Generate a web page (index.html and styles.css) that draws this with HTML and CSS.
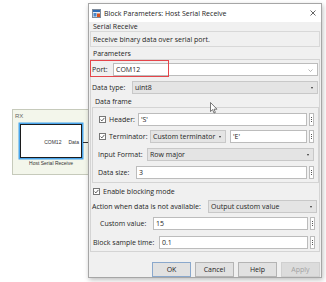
FILE: index.html
```html
<!DOCTYPE html>
<html lang="en">
<head>
    <meta charset="UTF-8">
    <title>Block Parameters: Host Serial Receive</title>
    <link rel="stylesheet" href="styles.css">
</head>
<body>
    <!-- model canvas -->
    <div class="subsystem">
        <span class="subsystem-label">RX</span>
    </div>
    <div class="block">
        <span class="block-port">COM12</span>
        <span class="block-out">Data</span>
    </div>
    <div class="wire"></div>
    <div class="block-name">Host Serial Receive</div>

    <!-- dialog -->
    <div class="dialog">
        <div class="titlebar">
            <svg class="title-icon" width="9" height="9" viewBox="0 0 9 9">
                <rect x="0.5" y="0.5" width="8" height="8" fill="#e8eef5" stroke="#7f8c9c"/>
                <rect x="1" y="1" width="7" height="2" fill="#2f6db5"/>
                <rect x="1.5" y="4" width="3" height="3.5" fill="#4a86c8"/>
                <rect x="5" y="4.5" width="3" height="3.5" fill="#d9531e"/>
            </svg>
            <span class="title-text">Block Parameters: Host Serial Receive</span>
            <svg class="close" width="6" height="6" viewBox="0 0 6 6">
                <path d="M0.5 0.5 L5.5 5.5 M5.5 0.5 L0.5 5.5" stroke="#555" stroke-width="0.9"/>
            </svg>
        </div>

        <div class="dialog-body">
            <div class="group-title">Serial Receive</div>
            <div class="desc">Receive binary data over serial port.</div>

            <div class="group-title params-title">Parameters</div>
            <div class="params">
                <div class="row row-port">
                    <span class="label w-port">Port:</span>
                    <div class="field input">COM12
                        <svg class="chev" width="5" height="3" viewBox="0 0 5 3"><path d="M0.5 0.5 L2.5 2.5 L4.5 0.5" stroke="#999" stroke-width="0.7" fill="none"/></svg>
                    </div>
                    <span class="highlight"></span>
                </div>
                <div class="row row-type">
                    <span class="label w-type">Data type:</span>
                    <div class="field select">uint8<i class="arrow"></i></div>
                </div>

                <div class="frame">
                    <div class="group-title frame-title">Data frame</div>
                    <div class="frame-box">
                        <div class="row row-check">
                            <span class="check"><svg width="7" height="7" viewBox="0 0 7 7"><rect x="0.5" y="0.5" width="6" height="6" fill="#fff" stroke="#777"/><path d="M1.6 3.6 L2.9 4.9 L5.4 1.9" stroke="#333" stroke-width="0.8" fill="none"/></svg></span>
                            <span class="label w-header">Header:</span>
                            <div class="field input">'S'</div>
                            <span class="more"><i></i></span>
                        </div>
                        <div class="row row-check row-term">
                            <span class="check"><svg width="7" height="7" viewBox="0 0 7 7"><rect x="0.5" y="0.5" width="6" height="6" fill="#fff" stroke="#777"/><path d="M1.6 3.6 L2.9 4.9 L5.4 1.9" stroke="#333" stroke-width="0.8" fill="none"/></svg></span>
                            <span class="label w-term">Terminator:</span>
                            <div class="field select term-select">Custom terminator<i class="arrow"></i></div>
                            <div class="field input">'E'</div>
                            <span class="more"><i></i></span>
                        </div>
                        <div class="row row-inner">
                            <span class="label w-format">Input Format:</span>
                            <div class="field select format-select">Row major<i class="arrow"></i></div>
                        </div>
                        <div class="row row-inner">
                            <span class="label w-size">Data size:</span>
                            <div class="field input">3</div>
                            <span class="more"><i></i></span>
                        </div>
                    </div>
                </div>

                <div class="row row-blocking">
                    <span class="check"><svg width="7" height="7" viewBox="0 0 7 7"><rect x="0.5" y="0.5" width="6" height="6" fill="#fff" stroke="#777"/><path d="M1.6 3.6 L2.9 4.9 L5.4 1.9" stroke="#333" stroke-width="0.8" fill="none"/></svg></span>
                    <span class="label">Enable blocking mode</span>
                </div>
                <div class="row row-action">
                    <span class="label w-action">Action when data is not available:</span>
                    <div class="field select action-select">Output custom value<i class="arrow"></i></div>
                </div>
                <div class="row row-custom">
                    <span class="label w-custom">Custom value:</span>
                    <div class="field input">15</div>
                    <span class="more"><i></i></span>
                </div>
                <div class="row row-sample">
                    <span class="label w-sample">Block sample time:</span>
                    <div class="field input">0.1</div>
                    <span class="more"><i></i></span>
                </div>
            </div>

            <div class="buttons">
                <button class="btn btn-ok">OK</button>
                <button class="btn">Cancel</button>
                <button class="btn">Help</button>
                <button class="btn btn-disabled">Apply</button>
            </div>
        </div>
    </div>

    <svg class="cursor" width="8" height="12" viewBox="0 0 8 12">
        <path d="M0.5 0.5 L0.5 9.5 L2.6 7.6 L4 11 L5.4 10.4 L4 7.2 L7 7.2 Z" fill="#fff" stroke="#444" stroke-width="0.7"/>
    </svg>
</body>
</html>
```

FILE: styles.css
```css
* {
    margin: 0;
    padding: 0;
    box-sizing: border-box;
}

body {
    width: 326px;
    height: 282px;
    position: relative;
    overflow: hidden;
    background: #fff;
    font-family: "Open Sans", "Noto Sans", sans-serif;
    font-size: 7px;
    color: #1e1e1e;
}

/* model canvas */
.subsystem {
    position: absolute;
    left: 12px;
    top: 109px;
    width: 90px;
    height: 66px;
    background: #f3f6eb;
    border: 1px solid #c6cabb;
    padding: 1px 2px;
}

.subsystem-label {
    font-family: "Liberation Sans", Arial, sans-serif;
    font-size: 6px;
    color: #666;
}

.block {
    position: absolute;
    left: 20px;
    top: 124px;
    width: 62px;
    height: 34px;
    background: #fff;
    border: 1px solid #1c1c1c;
    box-shadow: 0 0 0 1.5px #49a5ec;
    display: flex;
    align-items: center;
    justify-content: flex-end;
    gap: 7px;
    padding: 1px 2px 0 0;
    font-family: "Liberation Sans", Arial, sans-serif;
    font-size: 5px;
    color: #333;
}

.wire {
    position: absolute;
    left: 83px;
    top: 142px;
    width: 6px;
    height: 1px;
    background: #333;
}

.block-name {
    position: absolute;
    left: 20px;
    top: 160px;
    width: 62px;
    text-align: center;
    font-family: "Liberation Sans", Arial, sans-serif;
    font-size: 5px;
    color: #333;
}

/* dialog window */
.dialog {
    position: absolute;
    left: 88px;
    top: 3px;
    width: 234px;
    height: 275px;
    background: #f0f0f0;
    border: 1px solid #a6a6a6;
    box-shadow: 1px 2px 5px rgba(0, 0, 0, 0.25);
    display: flex;
    flex-direction: column;
}

.titlebar {
    height: 18px;
    background: #fff;
    display: flex;
    align-items: center;
    padding: 0 5px 0 3px;
    gap: 3px;
}

.title-text {
    flex: 1;
    color: #222;
}

.dialog-body {
    flex: 1;
    padding: 0 1px;
    display: flex;
    flex-direction: column;
}

.group-title {
    height: 9px;
    line-height: 9px;
    padding-left: 3px;
    color: #222;
}

.desc {
    height: 16px;
    border: 1px solid #d8d8d8;
    display: flex;
    align-items: center;
    padding-left: 2px;
}

.params-title {
    height: 11px;
    line-height: 11px;
    margin-top: 1px;
}

.params {
    height: 193px;
    border: 1px solid #d4d4d4;
    display: flex;
    flex-direction: column;
}

.row {
    display: flex;
    align-items: center;
    padding: 0 1px;
    white-space: nowrap;
}

.label {
    flex-shrink: 0;
}

.field {
    height: 13px;
    display: flex;
    align-items: center;
    padding: 0 2px;
    position: relative;
}

.input {
    flex: 1;
    background: #fff;
    border: 1px solid #bcbcbc;
}

.select {
    background: #e4e4e4;
    border: 1px solid #c8c8c8;
}

.arrow {
    position: absolute;
    right: 4px;
    top: 5px;
    border-left: 1.5px solid transparent;
    border-right: 1.5px solid transparent;
    border-top: 2px solid #333;
}

.chev {
    position: absolute;
    right: 4px;
    top: 5px;
}

.more {
    width: 5px;
    height: 13px;
    margin-left: 2px;
    background: #fff;
    border: 1px solid #bcbcbc;
    display: flex;
    justify-content: center;
    align-items: center;
    flex-shrink: 0;
}

.more i {
    width: 1px;
    height: 1px;
    background: #555;
    box-shadow: 0 -2px 0 #555, 0 2px 0 #555;
}

.check {
    display: flex;
    margin-right: 3px;
}

/* port row */
.row-port {
    height: 19px;
    position: relative;
}

.highlight {
    position: absolute;
    left: -1px;
    top: 0;
    width: 79px;
    height: 17px;
    border: 1.5px solid #e5454a;
}

.w-port { width: 21px; }

.row-type { height: 17px; }
.w-type { width: 40px; }
.row-type .select { flex: 1; }

/* data frame group */
.frame {
    margin-left: 1px;
}

.frame-title {
    height: 10px;
    line-height: 10px;
    margin-top: 1px;
}

.frame-box {
    border: 1px solid #d4d4d4;
    padding: 2px 4px 1px 0;
}

.frame-box .row { height: 18px; padding: 0; }
.frame-box .row-term { height: 17px; }
.row-check { padding-left: 6px !important; }
.row-inner { padding-left: 5px !important; }

.w-header { width: 29px; }
.w-term { width: 41px; }
.term-select { width: 76px; margin-right: 4px; }
.w-format { width: 49px; }
.format-select { flex: 1; }
.w-size { width: 38px; }

/* lower options */
.row-blocking {
    height: 16px;
    padding-left: 2px;
}

.row-action { height: 15px; }
.w-action { width: 116px; }
.action-select { flex: 1; margin-right: 1px; }

.row-custom {
    height: 18px;
    padding: 0 4px 0 9px;
}
.w-custom { width: 53px; }

.row-sample {
    height: 19px;
    padding: 2px 4px 0 2px;
}
.w-sample { width: 66px; }

/* buttons */
.buttons {
    flex: 1;
    display: flex;
    justify-content: flex-end;
    align-items: flex-start;
    gap: 4px;
    padding-top: 10px;
}

.btn {
    width: 39px;
    height: 15px;
    font-family: inherit;
    font-size: 7px;
    color: #1e1e1e;
    background: #e1e1e1;
    border: 1px solid #b4b4b4;
}

.btn-ok {
    border-color: #8aa8cc;
}

.btn-disabled {
    color: #a2a2a2;
    background: #dcdcdc;
    border-color: #d0d0d0;
}

.cursor {
    position: absolute;
    left: 210px;
    top: 102px;
}
```
